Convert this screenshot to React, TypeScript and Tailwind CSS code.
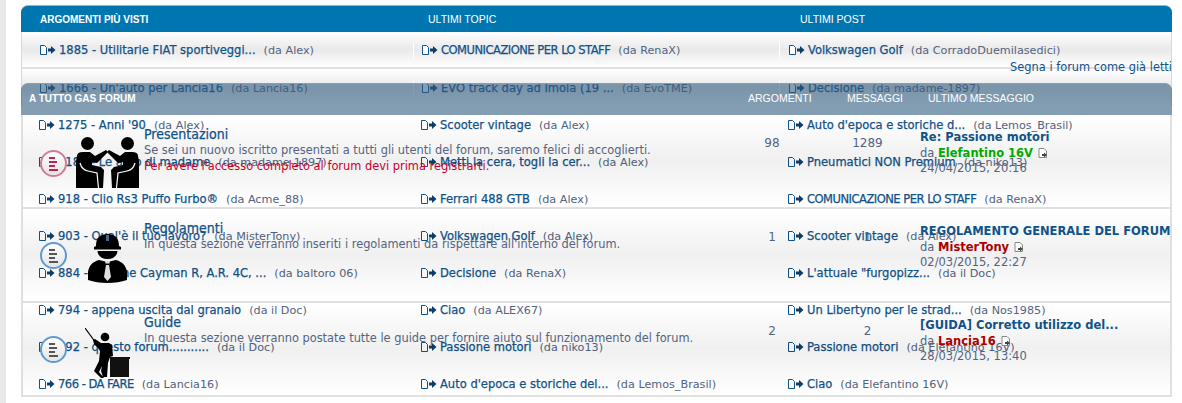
const topics = [
  [
    ['1885 - Utilitarie FIAT sportiveggi...', 'Alex'],
    ['COMUNICAZIONE PER LO STAFF', 'RenaX'],
    ['Volkswagen Golf', 'CorradoDuemilasedici'],
  ],
  [
    ["1666 - Un'auto per Lancia16", 'Lancia16'],
    ['EVO track day ad Imola (19 ...', 'EvoTME'],
    ['Decisione', 'madame-1897'],
  ],
  [
    ["1275 - Anni '90", 'Alex'],
    ['Scooter vintage', 'Alex'],
    ["Auto d'epoca e storiche d...", 'Lemos_Brasil'],
  ],
  [
    ['1185 - Le auto di madame', 'madame-1897'],
    ['Metti la cera, togli la cer...', 'Alex'],
    ['Pneumatici NON Premium', 'niko13'],
  ],
  [
    ['918 - Clio Rs3 Puffo Furbo®', 'Acme_88'],
    ['Ferrari 488 GTB', 'Alex'],
    ['COMUNICAZIONE PER LO STAFF', 'RenaX'],
  ],
  [
    ["903 - Qual'è il tuo lavoro?", 'MisterTony'],
    ['Volkswagen Golf', 'Alex'],
    ['Scooter vintage', 'Alex'],
  ],
  [
    ['884 - Porsche Cayman R, A.R. 4C, ...', 'baltoro 06'],
    ['Decisione', 'RenaX'],
    ['L\'attuale "furgopizz...', 'il Doc'],
  ],
  [
    ['794 - appena uscita dal granaio', 'il Doc'],
    ['Ciao', 'ALEX67'],
    ['Un Libertyno per le strad...', 'Nos1985'],
  ],
  [
    ['792 - questo forum...........', 'il Doc'],
    ['Passione motori', 'niko13'],
    ['Passione motori', 'Elefantino 16V'],
  ],
  [
    ['766 - DA FARE', 'Lancia16'],
    ["Auto d'epoca e storiche del...", 'Lemos_Brasil'],
    ['Ciao', 'Elefantino 16V'],
  ],
];

const forums = [
  {
    title: 'Presentazioni',
    desc: 'Se sei un nuovo iscritto presentati a tutti gli utenti del forum, saremo felici di accoglierti.',
    warn: "Per avere l'accesso completo al forum devi prima registrarti.",
    topics: '98',
    posts: '1289',
    last: 'Re: Passione motori',
    by: 'Elefantino 16V',
    date: '24/04/2015, 20:16',
    icon: 'people',
    dotTop: 'mt-[35px]',
    iconTop: 'mt-[22px]',
  },
  {
    title: 'Regolamenti',
    desc: "In questa sezione verranno inseriti i regolamenti da rispettare all'interno del forum.",
    topics: '1',
    posts: '1',
    last: 'REGOLAMENTO GENERALE DEL FORUM',
    by: 'MisterTony',
    date: '02/03/2015, 22:27',
    icon: 'worker',
    dotTop: 'mt-[33px]',
    iconTop: 'mt-[24px]',
  },
  {
    title: 'Guide',
    desc: 'In questa sezione verranno postate tutte le guide per fornire aiuto sul funzionamento del forum.',
    topics: '2',
    posts: '2',
    last: '[GUIDA] Corretto utilizzo del...',
    by: 'Lancia16',
    date: '28/03/2015, 13:40',
    icon: 'teacher',
    dotTop: 'mt-[33px]',
    iconTop: 'mt-[25px]',
  },
];

const PageArrow = () => (
  <svg width="17" height="10" viewBox="0 0 17 10" className="shrink-0 self-center">
    <path d="M1.5 .5h4l2 2v7h-6z" fill="#fff" stroke="#105289" />
    <path d="M9 3.5h3V1l4.500 4-4.500 4V6.500H9z" fill="#0d3f6b" />
  </svg>
);

const LastPostIcon = () => (
  <svg width="10" height="10" viewBox="0 0 10 10" className="inline-block ml-[5px] align-[-1px]">
    <path d="M1 .5h5l2.500 2.500v6.500H1z" fill="#fff" stroke="#888" />
    <path d="M4 6h2V4.500L9 7 6 9.500V8H4z" fill="#444" />
  </svg>
);

const ForumDot = ({ unread }: { unread: boolean }) => (
  <div
    className={`w-[27px] h-[27px] shrink-0 rounded-full border-2 flex flex-col items-start justify-center gap-[2px] pl-[7px] bg-gradient-to-b from-white to-[#e4e4e4] ${
      unread ? 'border-[#cf7d95]' : 'border-[#5f9bd0]'
    }`}
  >
    {[6, 8, 6, 9].map((w, i) => (
      <span
        key={i}
        style={{ width: w }}
        className={`block h-[2px] ${unread ? 'bg-[#c2224f]' : 'bg-[#555555]'}`}
      />
    ))}
  </div>
);

const Sitter = () => (
  <g>
    <circle cx="11.500" cy="6.500" r="6.500" fill="#000" />
    <path
      d="M1 19Q1 15 7 15H14L19 19 30 13 32 15 21 26 16 25V28L25 30 28 33 27 51H0V24z"
      fill="#000"
    />
    <path d="M4 26Q6 33 12 34L21 36 22.500 51" fill="none" stroke="#fff" strokeWidth="1.200" />
  </g>
);

const People = () => (
  <svg width="63" height="52" viewBox="0 0 63 52">
    <Sitter />
    <g transform="translate(63,0) scale(-1,1)">
      <Sitter />
    </g>
  </svg>
);

const Worker = () => (
  <svg width="39" height="50" viewBox="0 0 39 50">
    <path d="M8 13C8 5 12 1 19.500 1S31 5 31 13l2 1v2.500H6V14z" fill="#000" />
    <path d="M9.500 18h20c-.5 5-4 8-10 8s-9.500-3-10-8z" fill="#000" />
    <path d="M11 27l8.500 2 8.500-2c7 2 10 6 11 12v8c-6 2-12 3-19.500 3S6 49 0 47v-8c1-6 4-10 11-12z" fill="#000" />
    <path d="M17 28h5l-1 4 2 12-3.500 4-3.500-4 2-12z" fill="#e0e0e0" />
    <path d="M17.500 30.500h4l-.5 1.500h-3z" fill="#000" />
    <path d="M18 2h3v6h-3z" fill="#3d6a92" />
  </svg>
);

const Teacher = () => (
  <svg width="45" height="50" viewBox="0 0 45 50">
    <path d="M0 0 9.500 13" stroke="#000" strokeWidth="1.200" fill="none" />
    <circle cx="20" cy="9" r="4.300" fill="#000" />
    <path
      d="M8 12l2-1 6 4h8l3 2 1 11-3 1-2 6-1 14h-4l-2-6 1-5-3 6 5 6h-3l-7-7 5-10 1-10-2-3-4-4z"
      fill="#000"
    />
    <path d="M25 29h20v2h-1v18H25z" fill="#111" />
  </svg>
);

const icons: Record<string, () => React.JSX.Element> = { people: People, worker: Worker, teacher: Teacher };

export default function App() {
  return (
    <div className="flex h-[403px] w-[1182px] overflow-hidden bg-white font-['DejaVu_Sans',sans-serif]">
      <div className="w-[6px] shrink-0 bg-[#e8e8e8]" />

      <div className="relative w-[1151px] ml-[15px] pt-[5px]">
        {/* top topics table */}
        <div className="h-[27px] pt-[1px] rounded-t-[7px] border-t border-[#9fb0bd] bg-[#0076b1] grid grid-cols-[391px_366px_394px] items-center text-[10.500px] text-white font-['Liberation_Sans',sans-serif]">
          <span className="pl-[19px] font-bold text-[10px]">ARGOMENTI PIÙ VISTI</span>
          <span className="pl-[16px]">ULTIMI TOPIC</span>
          <span className="pl-[22px]">ULTIMI POST</span>
        </div>

        {topics.map((row, i) => (
          <div
            key={i}
            className={`h-[37px] grid grid-cols-[391px_366px_394px] items-center ${
              i < 2 ? 'bg-gradient-to-b from-white via-[#e9e9e9] to-white border-x border-[#d8d8d8]' : ''
            } ${i === 0 ? 'border-b-2 border-b-[#e0e0e0]' : ''}`}
          >
            {row.map(([title, author], j) => (
              <div
                key={j}
                className={`flex items-baseline h-[16px] ${
                  j === 0 ? 'pl-[17px]' : j === 1 ? 'pl-[7px] border-l border-white' : 'pl-[8px] border-l border-white'
                }`}
              >
                <PageArrow />
                <span
                  className={`ml-[3px] text-[12.800px] leading-[16px] text-[#105289] [-webkit-text-stroke:0.25px_#105289] font-['DejaVu_Sans_Condensed','DejaVu_Sans',sans-serif] whitespace-nowrap ${
                    title === title.toUpperCase() ? 'tracking-[-0.5px]' : ''
                  }`}
                >
                  {title}
                </span>
                <span className="ml-[8px] text-[11.200px] leading-[16px] text-[#536482] whitespace-nowrap">(da {author})</span>
              </div>
            ))}
          </div>
        ))}

        <a className="absolute right-0 top-[59px] text-[11.400px] text-[#105289] whitespace-nowrap">
          Segna i forum come già letti
        </a>

        {/* forum list, sits on top of the topics */}
        <div className="absolute left-0 right-0 top-[83px]">
          <div className="h-[32px] pb-[2px] rounded-t-[7px] border-t border-[#9a9a9a] bg-[#305c80]/60 flex items-center text-[10.500px] text-white font-['Liberation_Sans',sans-serif]">
            <span className="ml-[8px] w-[719px] font-bold text-[10px]">A TUTTO GAS FORUM</span>
            <span className="w-[99px]">ARGOMENTI</span>
            <span className="w-[81px]">MESSAGGI</span>
            <span>ULTIMO MESSAGGIO</span>
          </div>

          {forums.map((f) => {
            const Icon = icons[f.icon];
            return (
              <div
                key={f.title}
                className="h-[94px] flex items-start border-x-2 border-b-2 border-[#e0e0e0] bg-gradient-to-b from-transparent via-black/[.06] to-transparent"
              >
                <div className={`ml-[17px] ${f.dotTop}`}>
                  <ForumDot unread={f.icon === 'people'} />
                </div>
                <div className={`w-[63px] shrink-0 ml-[9px] flex justify-center ${f.iconTop}`}>
                  <Icon />
                </div>
                <div className="w-[603px] shrink-0 ml-[5px] mt-[11px]">
                  <h3 className="text-[14px] leading-[17px] text-[#105289] [-webkit-text-stroke:0.25px_#105289] font-['DejaVu_Sans_Condensed','DejaVu_Sans',sans-serif]">
                    {f.title}
                  </h3>
                  <p className="text-[11.400px] leading-[15px] text-[#536482] whitespace-nowrap">{f.desc}</p>
                  {f.warn && <p className="text-[11.400px] leading-[16px] text-[#c8002a] whitespace-nowrap">{f.warn}</p>}
                </div>
                <div className="w-[48px] shrink-0 ml-[1px] mt-[20px] text-center text-[12px] leading-[16px] text-[#536482]">{f.topics}</div>
                <div className="w-[95px] shrink-0 ml-[24px] mt-[20px] text-center text-[12px] leading-[16px] text-[#536482]">{f.posts}</div>
                <div className="ml-[5px] mt-[15px] text-[11.500px] leading-[15.500px] text-[#536482] whitespace-nowrap">
                  <div className="font-bold text-[#105289]">{f.last}</div>
                  <div>
                    da{' '}
                    <span className={`font-bold ${f.by === 'Elefantino 16V' ? 'text-[#00aa00]' : 'text-[#aa0000]'}`}>
                      {f.by}
                    </span>
                    <LastPostIcon />
                  </div>
                  <div>{f.date}</div>
                </div>
              </div>
            );
          })}
        </div>
      </div>
    </div>
  );
}
